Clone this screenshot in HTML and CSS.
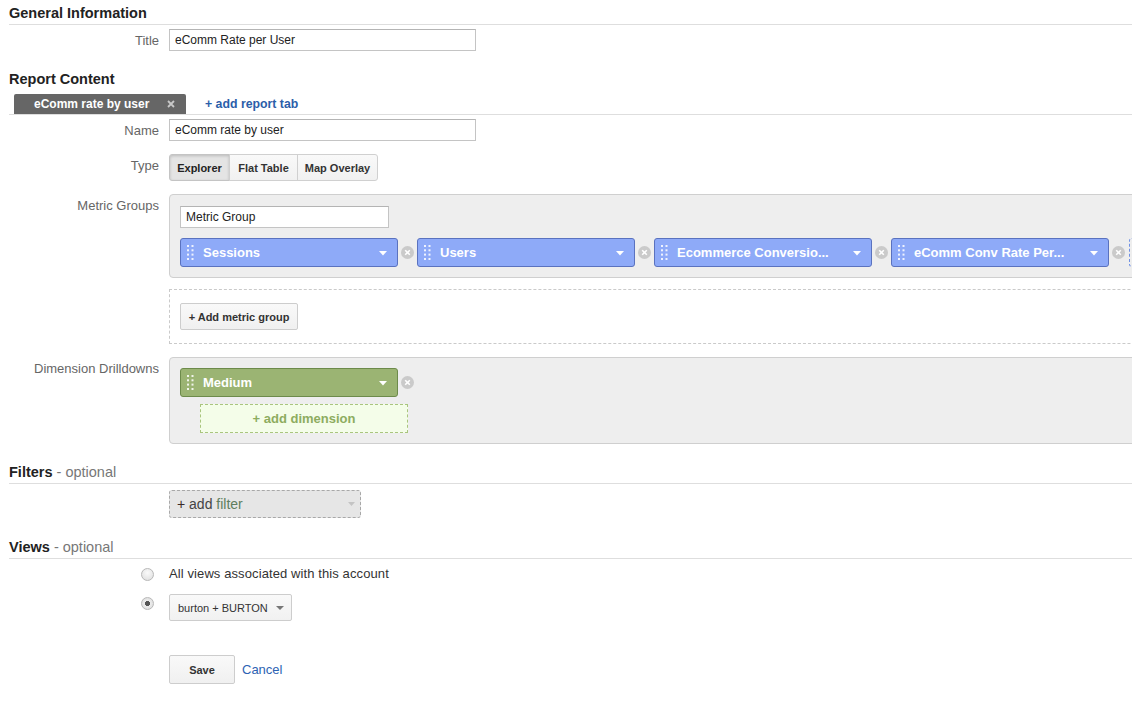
FILE: index.html
```html
<!DOCTYPE html>
<html lang="en">
<head>
<meta charset="utf-8">
<title>Custom Report</title>
<link rel="stylesheet" href="styles.css">
</head>
<body>
<div class="page">
  <h2 class="sec sec-line sec-general">General Information</h2>
  <div class="row r-title">
    <div class="lbl">Title</div>
    <div class="ctl"><input class="txt" type="text" value="eComm Rate per User"></div>
  </div>

  <h2 class="sec sec-report">Report Content</h2>
  <div class="tabs">
    <div class="tab"><span>eComm rate by user</span>
      <svg class="tab-x" width="8" height="8" viewBox="0 0 8 8"><path d="M1 1L7 7M7 1L1 7" stroke="#c8c8c8" stroke-width="1.8"/></svg>
    </div>
    <a class="addtab">+ add report tab</a>
  </div>

  <div class="row r-name">
    <div class="lbl">Name</div>
    <div class="ctl"><input class="txt" type="text" value="eComm rate by user"></div>
  </div>

  <div class="row r-type">
    <div class="lbl">Type</div>
    <div class="ctl">
      <div class="seg">
        <div class="seg-btn seg-on w1">Explorer</div>
        <div class="seg-btn w2">Flat Table</div>
        <div class="seg-btn w3">Map Overlay</div>
      </div>
    </div>
  </div>

  <div class="row r-metric">
    <div class="lbl">Metric Groups</div>
    <div class="ctl">
      <div class="panel panel-metric">
        <input class="txt mg-input" type="text" value="Metric Group">
        <div class="pills">
          <div class="pill pill-blue">
            <svg class="handle" width="7" height="15" viewBox="0 0 7 15"><g fill="#fff" fill-opacity="0.85"><rect x="0" y="0" width="2" height="2"/><rect x="4.5" y="0" width="2" height="2"/><rect x="0" y="4.3" width="2" height="2"/><rect x="4.5" y="4.3" width="2" height="2"/><rect x="0" y="8.6" width="2" height="2"/><rect x="4.5" y="8.6" width="2" height="2"/><rect x="0" y="13" width="2" height="2"/><rect x="4.5" y="13" width="2" height="2"/></g></svg>
            <span class="pill-text">Sessions</span>
            <svg class="caret" width="8" height="5" viewBox="0 0 8 5"><path d="M0 0H8L4 4.5Z" fill="#fff"/></svg>
          </div>
          <svg class="xbtn" width="13" height="13" viewBox="0 0 13 13"><circle cx="6.5" cy="6.5" r="6.5" fill="#cacaca"/><path d="M4.2 4.2L8.8 8.8M8.8 4.2L4.2 8.8" stroke="#fff" stroke-width="1.6"/></svg>
          <div class="pill pill-blue">
            <svg class="handle" width="7" height="15" viewBox="0 0 7 15"><g fill="#fff" fill-opacity="0.85"><rect x="0" y="0" width="2" height="2"/><rect x="4.5" y="0" width="2" height="2"/><rect x="0" y="4.3" width="2" height="2"/><rect x="4.5" y="4.3" width="2" height="2"/><rect x="0" y="8.6" width="2" height="2"/><rect x="4.5" y="8.6" width="2" height="2"/><rect x="0" y="13" width="2" height="2"/><rect x="4.5" y="13" width="2" height="2"/></g></svg>
            <span class="pill-text">Users</span>
            <svg class="caret" width="8" height="5" viewBox="0 0 8 5"><path d="M0 0H8L4 4.5Z" fill="#fff"/></svg>
          </div>
          <svg class="xbtn" width="13" height="13" viewBox="0 0 13 13"><circle cx="6.5" cy="6.5" r="6.5" fill="#cacaca"/><path d="M4.2 4.2L8.8 8.8M8.8 4.2L4.2 8.8" stroke="#fff" stroke-width="1.6"/></svg>
          <div class="pill pill-blue">
            <svg class="handle" width="7" height="15" viewBox="0 0 7 15"><g fill="#fff" fill-opacity="0.85"><rect x="0" y="0" width="2" height="2"/><rect x="4.5" y="0" width="2" height="2"/><rect x="0" y="4.3" width="2" height="2"/><rect x="4.5" y="4.3" width="2" height="2"/><rect x="0" y="8.6" width="2" height="2"/><rect x="4.5" y="8.6" width="2" height="2"/><rect x="0" y="13" width="2" height="2"/><rect x="4.5" y="13" width="2" height="2"/></g></svg>
            <span class="pill-text">Ecommerce Conversio...</span>
            <svg class="caret" width="8" height="5" viewBox="0 0 8 5"><path d="M0 0H8L4 4.5Z" fill="#fff"/></svg>
          </div>
          <svg class="xbtn" width="13" height="13" viewBox="0 0 13 13"><circle cx="6.5" cy="6.5" r="6.5" fill="#cacaca"/><path d="M4.2 4.2L8.8 8.8M8.8 4.2L4.2 8.8" stroke="#fff" stroke-width="1.6"/></svg>
          <div class="pill pill-blue">
            <svg class="handle" width="7" height="15" viewBox="0 0 7 15"><g fill="#fff" fill-opacity="0.85"><rect x="0" y="0" width="2" height="2"/><rect x="4.5" y="0" width="2" height="2"/><rect x="0" y="4.3" width="2" height="2"/><rect x="4.5" y="4.3" width="2" height="2"/><rect x="0" y="8.6" width="2" height="2"/><rect x="4.5" y="8.6" width="2" height="2"/><rect x="0" y="13" width="2" height="2"/><rect x="4.5" y="13" width="2" height="2"/></g></svg>
            <span class="pill-text">eComm Conv Rate Per...</span>
            <svg class="caret" width="8" height="5" viewBox="0 0 8 5"><path d="M0 0H8L4 4.5Z" fill="#fff"/></svg>
          </div>
          <svg class="xbtn" width="13" height="13" viewBox="0 0 13 13"><circle cx="6.5" cy="6.5" r="6.5" fill="#cacaca"/><path d="M4.2 4.2L8.8 8.8M8.8 4.2L4.2 8.8" stroke="#fff" stroke-width="1.6"/></svg>
          <div class="drop-blue"></div>
        </div>
      </div>
    </div>
  </div>

  <div class="row r-addmetric">
    <div class="lbl"></div>
    <div class="ctl">
      <div class="dashbox">
        <div class="btn btn-addmg">+ Add metric group</div>
      </div>
    </div>
  </div>

  <div class="row r-dim">
    <div class="lbl">Dimension Drilldowns</div>
    <div class="ctl">
      <div class="panel panel-dim">
        <div class="pills">
          <div class="pill pill-green">
            <svg class="handle" width="7" height="15" viewBox="0 0 7 15"><g fill="#fff" fill-opacity="0.85"><rect x="0" y="0" width="2" height="2"/><rect x="4.5" y="0" width="2" height="2"/><rect x="0" y="4.3" width="2" height="2"/><rect x="4.5" y="4.3" width="2" height="2"/><rect x="0" y="8.6" width="2" height="2"/><rect x="4.5" y="8.6" width="2" height="2"/><rect x="0" y="13" width="2" height="2"/><rect x="4.5" y="13" width="2" height="2"/></g></svg>
            <span class="pill-text">Medium</span>
            <svg class="caret" width="8" height="5" viewBox="0 0 8 5"><path d="M0 0H8L4 4.5Z" fill="#fff"/></svg>
          </div>
          <svg class="xbtn" width="13" height="13" viewBox="0 0 13 13"><circle cx="6.5" cy="6.5" r="6.5" fill="#cacaca"/><path d="M4.2 4.2L8.8 8.8M8.8 4.2L4.2 8.8" stroke="#fff" stroke-width="1.6"/></svg>
        </div>
        <div class="adddim">+ add dimension</div>
      </div>
    </div>
  </div>

  <h2 class="sec sec-line sec-filters">Filters <span class="opt">- optional</span></h2>
  <div class="row r-filter">
    <div class="lbl"></div>
    <div class="ctl">
      <div class="filterbox">
        <span class="f-plus">+</span>&nbsp;<span class="f-add">add</span>&nbsp;<span class="f-filter">filter</span>
        <svg class="f-caret" width="7" height="4" viewBox="0 0 7 4"><path d="M0 0H7L3.5 4Z" fill="#c4c4c4"/></svg>
      </div>
    </div>
  </div>

  <h2 class="sec sec-line sec-views">Views <span class="opt">- optional</span></h2>
  <div class="row r-view1">
    <div class="lbl lbl-radio"><span class="radio"></span></div>
    <div class="ctl view-text">All views associated with this account</div>
  </div>
  <div class="row r-view2">
    <div class="lbl lbl-radio2"><span class="radio radio-on"></span></div>
    <div class="ctl">
      <div class="select">
        <span>burton + BURTON</span>
        <svg class="sel-caret" width="8" height="4" viewBox="0 0 8 4"><path d="M0 0H8L4 4Z" fill="#777"/></svg>
      </div>
    </div>
  </div>

  <div class="row r-actions">
    <div class="lbl"></div>
    <div class="ctl actions">
      <div class="btn btn-save">Save</div>
      <a class="cancel">Cancel</a>
    </div>
  </div>
</div>
</body>
</html>
```

FILE: styles.css
```css
html, body {
  margin: 0;
  padding: 0;
  overflow: hidden;
  background: #fff;
}

body {
  font-family: "Liberation Sans", Arial, sans-serif;
  color: #222;
}

.page {
  width: 1400px;
  padding-left: 9px;
  box-sizing: border-box;
}

/* Section headings */
.sec {
  margin: 0;
  font-size: 14.5px;
  font-weight: bold;
  line-height: 18px;
  color: #222;
}

.sec-line {
  padding-bottom: 2px;
  border-bottom: 1px solid #dedede;
}

.sec-general { padding-top: 4px; }
.sec-report { margin-top: 19px; }
.sec-filters { margin-top: 19px; }
.sec-views { margin-top: 20px; }

.opt {
  font-weight: normal;
  color: #777;
}

/* Form rows */
.row {
  display: grid;
  grid-template-columns: 150px 1fr;
  column-gap: 10px;
}

.lbl {
  text-align: right;
  font-size: 13px;
  line-height: 16px;
  padding-top: 4px;
  color: #666;
}

.ctl {
  min-width: 0;
}

.r-title { margin-top: 4px; }
.r-name { margin-top: 4px; }
.r-type { margin-top: 13px; }
.r-metric { margin-top: 13px; }
.r-addmetric { margin-top: 11px; }
.r-dim { margin-top: 13px; }
.r-filter { margin-top: 6px; }
.r-view1 { margin-top: 7px; }
.r-view2 { margin-top: 12px; }
.r-actions { margin-top: 34px; }

/* Text inputs */
.txt {
  display: block;
  width: 307px;
  height: 22px;
  box-sizing: border-box;
  margin: 0;
  border: 1px solid #c4c4c4;
  border-top-color: #b4b4b4;
  padding: 0 5px;
  font-family: "Liberation Sans", Arial, sans-serif;
  font-size: 12px;
  color: #222;
  background: #fff;
  outline: none;
}

/* Tabs */
.tabs {
  margin-top: 6px;
  display: flex;
  align-items: flex-end;
  height: 20px;
  padding-left: 5px;
  border-bottom: 1px solid #dedede;
}

.tab {
  display: flex;
  align-items: center;
  width: 172px;
  height: 20px;
  box-sizing: border-box;
  padding: 0 11px 0 20px;
  background: #666;
  color: #fff;
  font-size: 12px;
  font-weight: bold;
  border-radius: 2px 2px 0 0;
}

.tab-x {
  margin-left: auto;
}

.addtab {
  margin-left: 19px;
  align-self: center;
  font-size: 12.3px;
  font-weight: bold;
  color: #2b5ea9;
}

/* Segmented type control */
.seg {
  display: flex;
}

.seg-btn {
  height: 27px;
  box-sizing: border-box;
  display: flex;
  align-items: center;
  justify-content: center;
  border: 1px solid #d0d0d0;
  background: linear-gradient(#f9f9f9, #f1f1f1);
  font-size: 11px;
  font-weight: bold;
  color: #333;
}

.seg-btn + .seg-btn { margin-left: -1px; }

.seg-btn.w1 { width: 61px; border-radius: 3px 0 0 3px; }
.seg-btn.w2 { width: 69px; }
.seg-btn.w3 { width: 81px; border-radius: 0 3px 3px 0; }

.seg-on {
  background: #e4e4e4;
  border-color: #c4c4c4;
  box-shadow: inset 0 1px 3px rgba(0, 0, 0, 0.18);
  color: #222;
}

/* Panels */
.panel {
  background: #eeeeee;
  border: 1px solid #cfcfcf;
  border-radius: 4px;
}

.panel-metric {
  padding: 11px 10px 10px;
}

.panel-dim {
  padding: 10px;
}

.mg-input {
  width: 209px;
}

.pills {
  display: flex;
  align-items: center;
}

.panel-metric .pills {
  margin-top: 10px;
}

.pill {
  flex: 0 0 auto;
  display: flex;
  align-items: center;
  width: 218px;
  height: 29px;
  box-sizing: border-box;
  padding-left: 6px;
  padding-right: 10px;
  border: 1px solid;
  border-radius: 3px;
  color: #fff;
  font-size: 13px;
  font-weight: bold;
}

.pill-blue {
  background: #8eaaf8;
  border-color: #5a72bf;
}

.pill-green {
  background: #9bb473;
  border-color: #6d8b4b;
}

.handle {
  flex: 0 0 auto;
}

.pill-text {
  flex: 1;
  margin-left: 9px;
  white-space: nowrap;
  overflow: hidden;
}

.caret {
  flex: 0 0 auto;
  margin-top: 2px;
}

.xbtn {
  flex: 0 0 auto;
  margin: 0 3px;
}

.drop-blue {
  flex: 0 0 auto;
  width: 200px;
  height: 29px;
  box-sizing: border-box;
  border: 1px dashed #6f90e4;
  border-radius: 3px;
  margin-left: 1px;
}

.dashbox {
  border: 1px dashed #cacaca;
  padding: 13px 10px;
}

/* Buttons */
.btn {
  display: flex;
  align-items: center;
  justify-content: center;
  box-sizing: border-box;
  border: 1px solid #cdcdcd;
  border-radius: 2px;
  background: linear-gradient(#f9f9f9, #f0f0f0);
  font-size: 11px;
  font-weight: bold;
  color: #333;
}

.btn-addmg {
  width: 118px;
  height: 27px;
}

.btn-save {
  width: 66px;
  height: 29px;
}

/* Add dimension */
.adddim {
  margin-top: 7px;
  margin-left: 20px;
  width: 208px;
  height: 29px;
  box-sizing: border-box;
  display: flex;
  align-items: center;
  justify-content: center;
  border: 1px dashed #a9c57e;
  background: #f4fde9;
  color: #8dac60;
  font-size: 13px;
  font-weight: bold;
}

/* Filter */
.filterbox {
  display: flex;
  align-items: center;
  width: 192px;
  height: 28px;
  box-sizing: border-box;
  padding-left: 7px;
  border: 1px dashed #a8a8a8;
  border-radius: 3px;
  background: #e6e6e6;
  font-size: 14px;
  color: #444;
}

.f-plus { color: #3a2a2a; }
.f-add { color: #444; }
.f-filter { color: #5f7e60; }

.f-caret {
  margin-left: auto;
  margin-right: 5px;
}

/* Views */
.lbl-radio {
  padding-top: 0;
  height: 16px;
  display: flex;
  align-items: center;
  justify-content: flex-end;
}

.lbl-radio2 {
  padding-top: 3px;
  display: flex;
  justify-content: flex-end;
}

.radio {
  display: block;
  width: 13px;
  height: 13px;
  box-sizing: border-box;
  margin-right: 5px;
  border-radius: 50%;
  border: 1px solid #b8b8b8;
  background: radial-gradient(circle at 50% 35%, #fafafa, #dcdcdc);
}

.radio-on {
  background: radial-gradient(circle, #555 0, #555 2.3px, #ececec 2.8px, #d8d8d8 100%);
}

.view-text {
  font-size: 13px;
  line-height: 16px;
  color: #333;
  letter-spacing: 0.1px;
}

.select {
  display: flex;
  align-items: center;
  width: 123px;
  height: 27px;
  box-sizing: border-box;
  padding: 0 7px 0 8px;
  border: 1px solid #cdcdcd;
  border-radius: 2px;
  background: linear-gradient(#f9f9f9, #f1f1f1);
  font-size: 11px;
  color: #333;
}

.sel-caret {
  margin-left: auto;
}

.actions {
  display: flex;
  align-items: center;
}

.cancel {
  margin-left: 7px;
  font-size: 13px;
  color: #2d63b3;
}
```
